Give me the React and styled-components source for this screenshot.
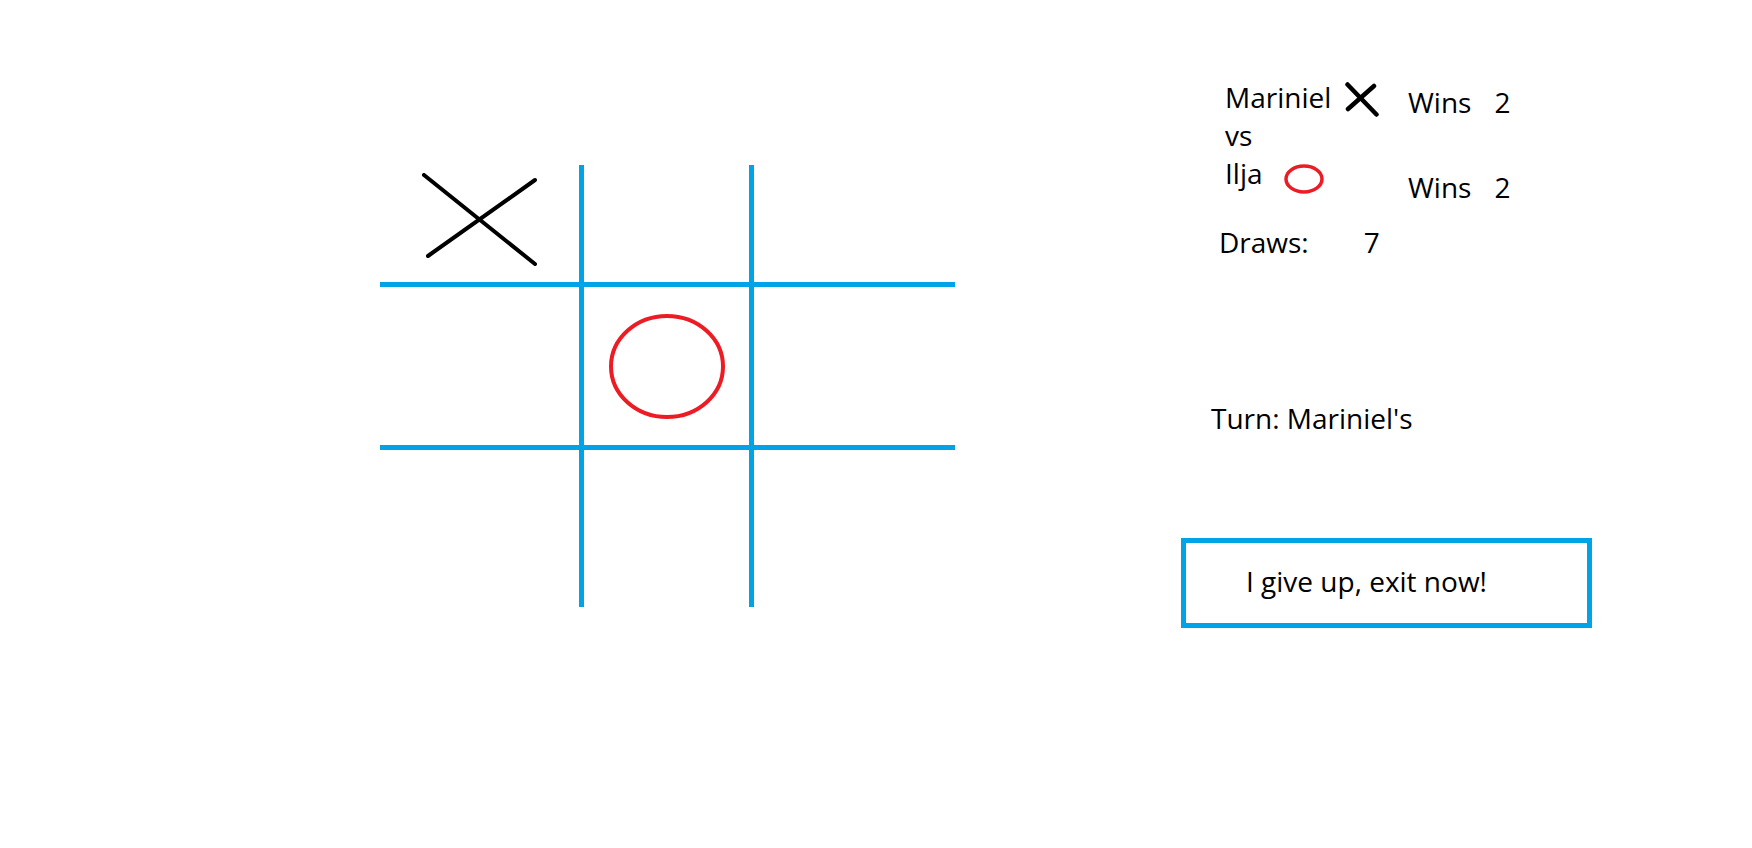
import React from 'react';
import styled, { createGlobalStyle } from 'styled-components';

const BLUE = '#00a2e8';
const RED = '#ed1c24';

const GlobalStyle = createGlobalStyle`
  html, body {
    margin: 0;
    padding: 0;
    background: #fff;
  }
  body {
    font-family: "Open Sans", "Liberation Sans", sans-serif;
    color: #000;
  }
`;

const Page = styled.div`
  display: flex;
  align-items: flex-start;
  width: 1752px;
  height: 848px;
  background: #fff;
`;

const Board = styled.div`
  display: grid;
  grid-template-columns: 204px 170px 201px;
  grid-template-rows: 122px 163px 157px;
  margin: 165px 0 0 380px;
`;

const Cell = styled.div`
  box-sizing: border-box;
  display: flex;
  align-items: center;
  justify-content: center;
  border-right: ${p => (p.$col < 2 ? `5px solid ${BLUE}` : 'none')};
  border-bottom: ${p => (p.$row < 2 ? `5px solid ${BLUE}` : 'none')};
  cursor: pointer;
`;

const Mark = styled.svg`
  display: block;
  margin-bottom: ${p => p.$lift || 0}px;
`;

const Panel = styled.aside`
  display: flex;
  flex-direction: column;
  align-items: flex-start;
  margin: 78px 0 0 226px;
  font-size: 28px;
  line-height: 38px;
`;

const Scoreboard = styled.div`
  display: flex;
  padding-left: 44px;
`;

const Names = styled.div`
  display: flex;
  flex-direction: column;
  width: 183px;
`;

const NameRow = styled.div`
  display: flex;
  align-items: center;
  height: 38px;
  gap: ${p => p.$gap || 0}px;
`;

const Icon = styled.svg`
  display: block;
  margin-top: ${p => p.$drop || 0}px;
`;

const WinsColumn = styled.div`
  display: flex;
  flex-direction: column;
  gap: 47px;
  padding-top: 5px;
`;

const Stat = styled.div`
  display: flex;
  gap: ${p => p.$gap}px;
  padding-left: ${p => p.$indent || 0}px;
  margin-top: ${p => p.$top || 0}px;
`;

const Turn = styled.div`
  padding-left: 30px;
  margin-top: 138px;
`;

const ExitButton = styled.button`
  box-sizing: border-box;
  width: 411px;
  height: 90px;
  margin-top: 101px;
  padding: 19px 0 0 60px;
  border: 5px solid ${BLUE};
  background: #fff;
  font: inherit;
  color: #000;
  text-align: left;
  align-self: flex-start;
  display: flex;
  align-items: flex-start;
  cursor: pointer;
`;

function BigX() {
  return (
    <Mark width="116" height="93" viewBox="0 0 116 93" $lift={8}>
      <g stroke="#000" strokeWidth="4" strokeLinecap="round">
        <line x1="2" y1="2" x2="113" y2="91" />
        <line x1="6" y1="83" x2="113" y2="7" />
      </g>
    </Mark>
  );
}

function BigO() {
  return (
    <Mark width="118" height="107" viewBox="0 0 118 107">
      <ellipse cx="59" cy="53.5" rx="56" ry="50.5" fill="none" stroke={RED} strokeWidth="4" />
    </Mark>
  );
}

const board = ['X', '', '', '', 'O', '', '', '', ''];

export default function App() {
  return (
    <>
      <GlobalStyle />
      <Page>
        <Board>
          {board.map((v, i) => (
            <Cell key={i} $row={Math.floor(i / 3)} $col={i % 3}>
              {v === 'X' && <BigX />}
              {v === 'O' && <BigO />}
            </Cell>
          ))}
        </Board>

        <Panel>
          <Scoreboard>
            <Names>
              <NameRow $gap={14}>
                <span>Mariniel</span>
                <Icon width="34" height="35" viewBox="0 0 34 35" $drop={5}>
                  <g stroke="#000" strokeWidth="4.5" strokeLinecap="round">
                    <line x1="2.5" y1="2.5" x2="31.5" y2="32.5" />
                    <line x1="3" y1="27" x2="29" y2="4" />
                  </g>
                </Icon>
              </NameRow>
              <NameRow>vs</NameRow>
              <NameRow $gap={20}>
                <span>Ilja</span>
                <Icon width="42" height="32" viewBox="0 0 42 32" $drop={12}>
                  <ellipse cx="21" cy="16" rx="18" ry="13" fill="none" stroke={RED} strokeWidth="3.5" />
                </Icon>
              </NameRow>
            </Names>
            <WinsColumn>
              <Stat $gap={23}>
                <span>Wins</span>
                <span>2</span>
              </Stat>
              <Stat $gap={23}>
                <span>Wins</span>
                <span>2</span>
              </Stat>
            </WinsColumn>
          </Scoreboard>

          <Stat $gap={55} $indent={38} $top={17}>
            <span>Draws:</span>
            <span>7</span>
          </Stat>

          <Turn>Turn: Mariniel's</Turn>

          <ExitButton type="button">I give up, exit now!</ExitButton>
        </Panel>
      </Page>
    </>
  );
}
